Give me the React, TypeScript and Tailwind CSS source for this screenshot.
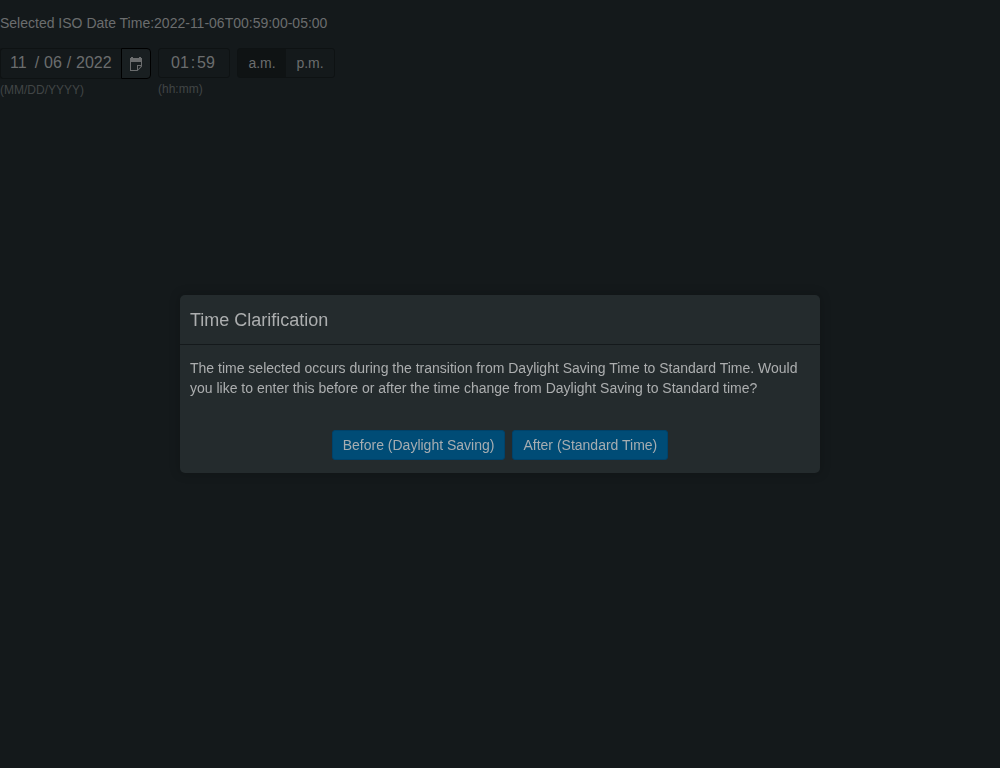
import { useState } from 'react';

const fieldClass =
  'h-7 bg-transparent p-0 text-left text-base text-[#6b6d6e] outline-none';

function CalendarIcon() {
  return (
    <svg className="h-[14px] w-3" viewBox="0 0 12 14" fill="#6b6d6e" aria-hidden="true">
      <path d="M1 0h2v1h6V0h2v1h1v4H0V1h1z" />
      <path d="M0 5h1v8h6v1H0zM11 5h1v4h-1z" />
      <path fillRule="evenodd" d="M7 8h5v1.5L7.500 14H7zM8 9v3.500L11 9z" />
    </svg>
  );
}

function DateField() {
  const [month, setMonth] = useState('11');
  const [day, setDay] = useState('06');
  const [year, setYear] = useState('2022');

  return (
    <div>
      <div className="flex h-[31px]">
        <div className="flex items-start rounded-l-[3px] border border-r-0 border-[#0e1213] pl-[9px] pr-[9px] text-base leading-7 text-[#6b6d6e]">
          <input aria-label="Month" className={`${fieldClass} w-5`} value={month} onChange={(e) => setMonth(e.target.value)} />
          <span className="w-[14px] text-center">/</span>
          <input aria-label="Day" className={`${fieldClass} w-[18px]`} value={day} onChange={(e) => setDay(e.target.value)} />
          <span className="w-[14px] text-center">/</span>
          <input aria-label="Year" className={`${fieldClass} w-9`} value={year} onChange={(e) => setYear(e.target.value)} />
        </div>
        <button
          type="button"
          aria-label="Open calendar"
          className="flex w-[30px] items-center justify-center rounded-r-[4px] border border-black bg-[#191f21]"
        >
          <CalendarIcon />
        </button>
      </div>
      <div className="mt-[3px] text-xs text-[#414546]">(MM/DD/YYYY)</div>
    </div>
  );
}

function TimeField() {
  const [hour, setHour] = useState('01');
  const [minute, setMinute] = useState('59');

  return (
    <div>
      <div className="flex h-[30px] w-[72px] items-center rounded-[3px] border border-[#0e1213] pl-3 text-base text-[#6b6d6e]">
        <input aria-label="Hour" className={`${fieldClass} w-[18px]`} value={hour} onChange={(e) => setHour(e.target.value)} />
        <span className="w-2 text-center">:</span>
        <input aria-label="Minute" className={`${fieldClass} w-[18px]`} value={minute} onChange={(e) => setMinute(e.target.value)} />
      </div>
      <div className="mt-[3px] text-xs text-[#414546]">(hh:mm)</div>
    </div>
  );
}

function MeridiemToggle() {
  const [period, setPeriod] = useState('a.m.');

  return (
    <div className="flex h-[30px] overflow-hidden rounded-[3px] border border-[#0e1213] text-sm text-[#6b6d6e]">
      {['a.m.', 'p.m.'].map((label) => (
        <button
          key={label}
          type="button"
          aria-pressed={period === label}
          onClick={() => setPeriod(label)}
          className={`w-12 ${period === label ? 'bg-[#0f1314]' : ''}`}
        >
          {label}
        </button>
      ))}
    </div>
  );
}

function ClarificationDialog() {
  const buttonClass =
    'h-[30px] rounded-[3px] border border-[#00426a] bg-[#004c76] px-[10px] text-sm text-[#a6adb1]';

  return (
    <div className="fixed inset-0 flex items-center justify-center">
      <section
        role="dialog"
        aria-modal="true"
        aria-labelledby="clarification-title"
        className="w-full max-w-[640px] rounded-[5px] bg-[#242b2d] text-[#acaeaf] shadow-[0_0_10px_2px_rgba(0,0,0,0.15)]"
      >
        <header className="border-b border-[#14191b] px-[10px] pb-[11px] pt-[13px]">
          <h1 id="clarification-title" className="text-lg leading-[25px]">
            Time Clarification
          </h1>
        </header>
        <p className="px-[10px] pt-[13px] text-sm">
          The time selected occurs during the transition from Daylight Saving Time to Standard
          Time. Would you like to enter this before or after the time change from Daylight Saving
          to Standard time?
        </p>
        <footer className="flex justify-center gap-[7px] pb-[13px] pt-8">
          <button type="button" className={buttonClass}>
            Before (Daylight Saving)
          </button>
          <button type="button" className={buttonClass}>
            After (Standard Time)
          </button>
        </footer>
      </section>
    </div>
  );
}

export default function App() {
  return (
    <div className="min-h-screen bg-[#14191b] pt-[13px] font-['Liberation_Sans',Arial,sans-serif]">
      <p className="text-sm text-[#6b6d6e]">Selected ISO Date Time:2022-11-06T00:59:00-05:00</p>
      <div className="mt-[15px] flex items-start gap-[7px]">
        <DateField />
        <TimeField />
        <MeridiemToggle />
      </div>
      <ClarificationDialog />
    </div>
  );
}
